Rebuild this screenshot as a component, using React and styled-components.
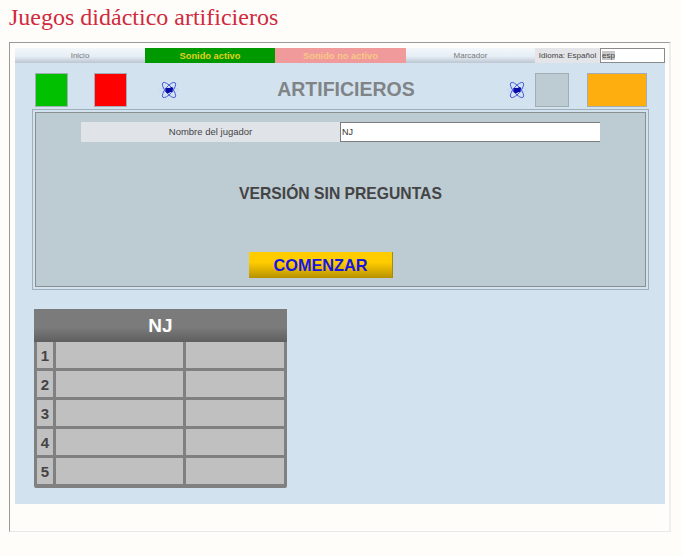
import { Fragment } from "react";
import styled, { createGlobalStyle } from "styled-components";

const GlobalStyle = createGlobalStyle`
  html, body {
    margin: 0;
    padding: 0;
    background: #fffdf9;
    font-family: "Liberation Sans", Arial, sans-serif;
  }
`;

const Page = styled.div`
  width: 682px;
  height: 556px;
  padding: 5px 0 0 9px;
  box-sizing: border-box;
  overflow: hidden;
`;

const PageTitle = styled.h1`
  margin: 0 0 12px;
  height: 25px;
  font-family: "Liberation Serif", Georgia, serif;
  font-size: 24px;
  line-height: 25px;
  font-weight: 400;
  color: #d02a3e;
`;

const Frame = styled.div`
  width: 662px;
  height: 490px;
  box-sizing: border-box;
  padding: 5px;
  border-style: solid;
  border-width: 1px 2px 1px 1px;
  border-color: #9a9a9a #eeeeee #e8e8e8 #9a9a9a;
`;

const Game = styled.div`
  width: 650px;
  height: 456px;
  background: #d2e3ef;
`;

const NavBar = styled.div`
  display: grid;
  grid-template-columns: 130px 130px 131px 129px 65px 65px;
  height: 15px;
`;

const Tab = styled.div`
  display: flex;
  align-items: center;
  justify-content: center;
  font-size: ${(p) => (p.$bold ? 9.3 : 8)}px;
  color: ${(p) => p.$text || "#777"};
  font-weight: ${(p) => (p.$bold ? 700 : 400)};
  background: ${(p) => p.$bg || "linear-gradient(#f3f7fb, #e6eef6 55%, #bcc6d1)"};
`;

const LangLabel = styled.div`
  display: flex;
  align-items: center;
  justify-content: center;
  background: #e3e5e8;
  font-size: 8px;
  color: #444;
`;

const LangInput = styled.div`
  box-sizing: border-box;
  background: #fff;
  border: 1px solid #8a8a8a;
  font-size: 8px;
  line-height: 13px;
  padding-left: 1px;
  color: #444;
  span {
    background: #c8c8c8;
  }
`;

const Header = styled.div`
  display: flex;
  align-items: center;
  height: 33px;
  margin-top: 10px;
  padding-left: 20px;
`;

const Square = styled.div`
  box-sizing: border-box;
  width: ${(p) => p.$w}px;
  height: 34px;
  margin-left: ${(p) => p.$before || 0}px;
  margin-right: ${(p) => p.$gap || 0}px;
  background: ${(p) => p.$bg};
  border: 1px solid #a2adb6;
  flex: none;
`;

const Atom = styled.svg`
  width: 20px;
  height: 18px;
  flex: none;
  margin-left: ${(p) => p.$left}px;
`;

const GameTitle = styled.div`
  width: 297px;
  margin-left: 18.5px;
  flex: none;
  text-align: center;
  font-size: 19.5px;
  font-weight: 700;
  color: #808487;
`;

const Panel = styled.div`
  box-sizing: border-box;
  width: 617px;
  height: 181px;
  margin: 3px 0 0 17px;
  padding: 2px;
  border: 1px solid #9fb0bb;
`;

const PanelInner = styled.div`
  box-sizing: border-box;
  height: 100%;
  background: #bdcbd3;
  border: 1px solid #8b8f91;
  padding-top: 9px;
  display: flex;
  flex-direction: column;
  align-items: center;
`;

const NameRow = styled.div`
  display: grid;
  grid-template-columns: 259px 260px;
  height: 20px;
`;

const NameLabel = styled.div`
  display: flex;
  align-items: center;
  justify-content: center;
  padding-bottom: 1px;
  background: #e0e3e8;
  font-size: 9.5px;
  color: #444;
`;

const NameInput = styled.div`
  box-sizing: border-box;
  background: #fff;
  border-style: solid;
  border-width: 1px 0 1px 1px;
  border-color: #7d7d7d;
  font-size: 9px;
  line-height: 18px;
  padding-left: 1px;
  color: #333;
`;

const Notice = styled.div`
  margin-top: 43px;
  font-size: 15.7px;
  line-height: 18px;
  font-weight: 700;
  color: #444;
`;

const StartButton = styled.button`
  display: block;
  box-sizing: border-box;
  width: 144px;
  height: 26px;
  margin: 49px 39px 0 0;
  padding: 0;
  border: 0;
  border-right: 1px solid #a68a10;
  background: linear-gradient(#ffcc00 40%, #b89200);
  font-family: inherit;
  font-size: 16.3px;
  font-weight: 700;
  color: #1616e0;
`;

const ScoreTable = styled.div`
  display: grid;
  grid-template-columns: 16px 127px 98px;
  grid-template-rows: 30px repeat(5, 26px);
  gap: 3px;
  width: 253px;
  box-sizing: border-box;
  margin: 19px 0 0 19px;
  padding: 0 3px 4px;
  background: #808080;
  border-radius: 2px;
`;

const ScoreHead = styled.div`
  grid-column: 1 / -1;
  height: 33px;
  margin: 0 -3px -3px;
  display: flex;
  align-items: center;
  justify-content: center;
  background: linear-gradient(#7b7b7b 55%, #5f5f5f);
  font-size: 19px;
  font-weight: 700;
  color: #fff;
`;

const Cell = styled.div`
  background: #c0c0c0;
  display: flex;
  align-items: center;
  justify-content: center;
  font-size: 15px;
  font-weight: 700;
  color: #444;
`;

const AtomIcon = ({ left }) => (
  <Atom $left={left} viewBox="0 0 20 18">
    <g fill="none" strokeWidth="0.8">
      <ellipse cx="10" cy="9" rx="9.5" ry="2.6" stroke="#c2d6f4" />
      <ellipse cx="10" cy="9" rx="9.5" ry="3.5" stroke="#3044d8" transform="rotate(50 10 9)" />
      <ellipse cx="10" cy="9" rx="9.5" ry="3.5" stroke="#3044d8" transform="rotate(-50 10 9)" />
    </g>
    <rect x="6.5" y="7" width="7" height="4" fill="#0a0aa8" />
    <circle cx="9" cy="10" r="2.2" fill="#0a0aa8" />
    <circle cx="12.5" cy="7.5" r="1.6" fill="#0a0aa8" />
  </Atom>
);

const rows = [1, 2, 3, 4, 5];

export default function App() {
  return (
    <Page>
      <GlobalStyle />
      <PageTitle>Juegos didáctico artificieros</PageTitle>
      <Frame>
        <Game>
          <NavBar>
            <Tab>Inicio</Tab>
            <Tab $bold $bg="#009900" $text="#e3d21a">Sonido activo</Tab>
            <Tab $bold $bg="#f09a9c" $text="#f8c884">Sonido no activo</Tab>
            <Tab>Marcador</Tab>
            <LangLabel>Idioma: Español</LangLabel>
            <LangInput><span>esp</span></LangInput>
          </NavBar>
          <Header>
            <Square $w={33} $gap={26} $bg="#00c000" />
            <Square $w={33} $bg="#ff0000" />
            <AtomIcon left={32} />
            <GameTitle>ARTIFICIEROS</GameTitle>
            <AtomIcon left={12.5} />
            <Square $w={34} $before={8} $gap={18} $bg="#bdcbd3" />
            <Square $w={60} $bg="#ffae10" />
          </Header>
          <Panel>
            <PanelInner>
              <NameRow>
                <NameLabel>Nombre del jugador</NameLabel>
                <NameInput>NJ</NameInput>
              </NameRow>
              <Notice>VERSIÓN SIN PREGUNTAS</Notice>
              <StartButton>COMENZAR</StartButton>
            </PanelInner>
          </Panel>
          <ScoreTable>
            <ScoreHead>NJ</ScoreHead>
            {rows.map((n) => (
              <Fragment key={n}>
                <Cell>{n}</Cell>
                <Cell />
                <Cell />
              </Fragment>
            ))}
          </ScoreTable>
        </Game>
      </Frame>
    </Page>
  );
}
